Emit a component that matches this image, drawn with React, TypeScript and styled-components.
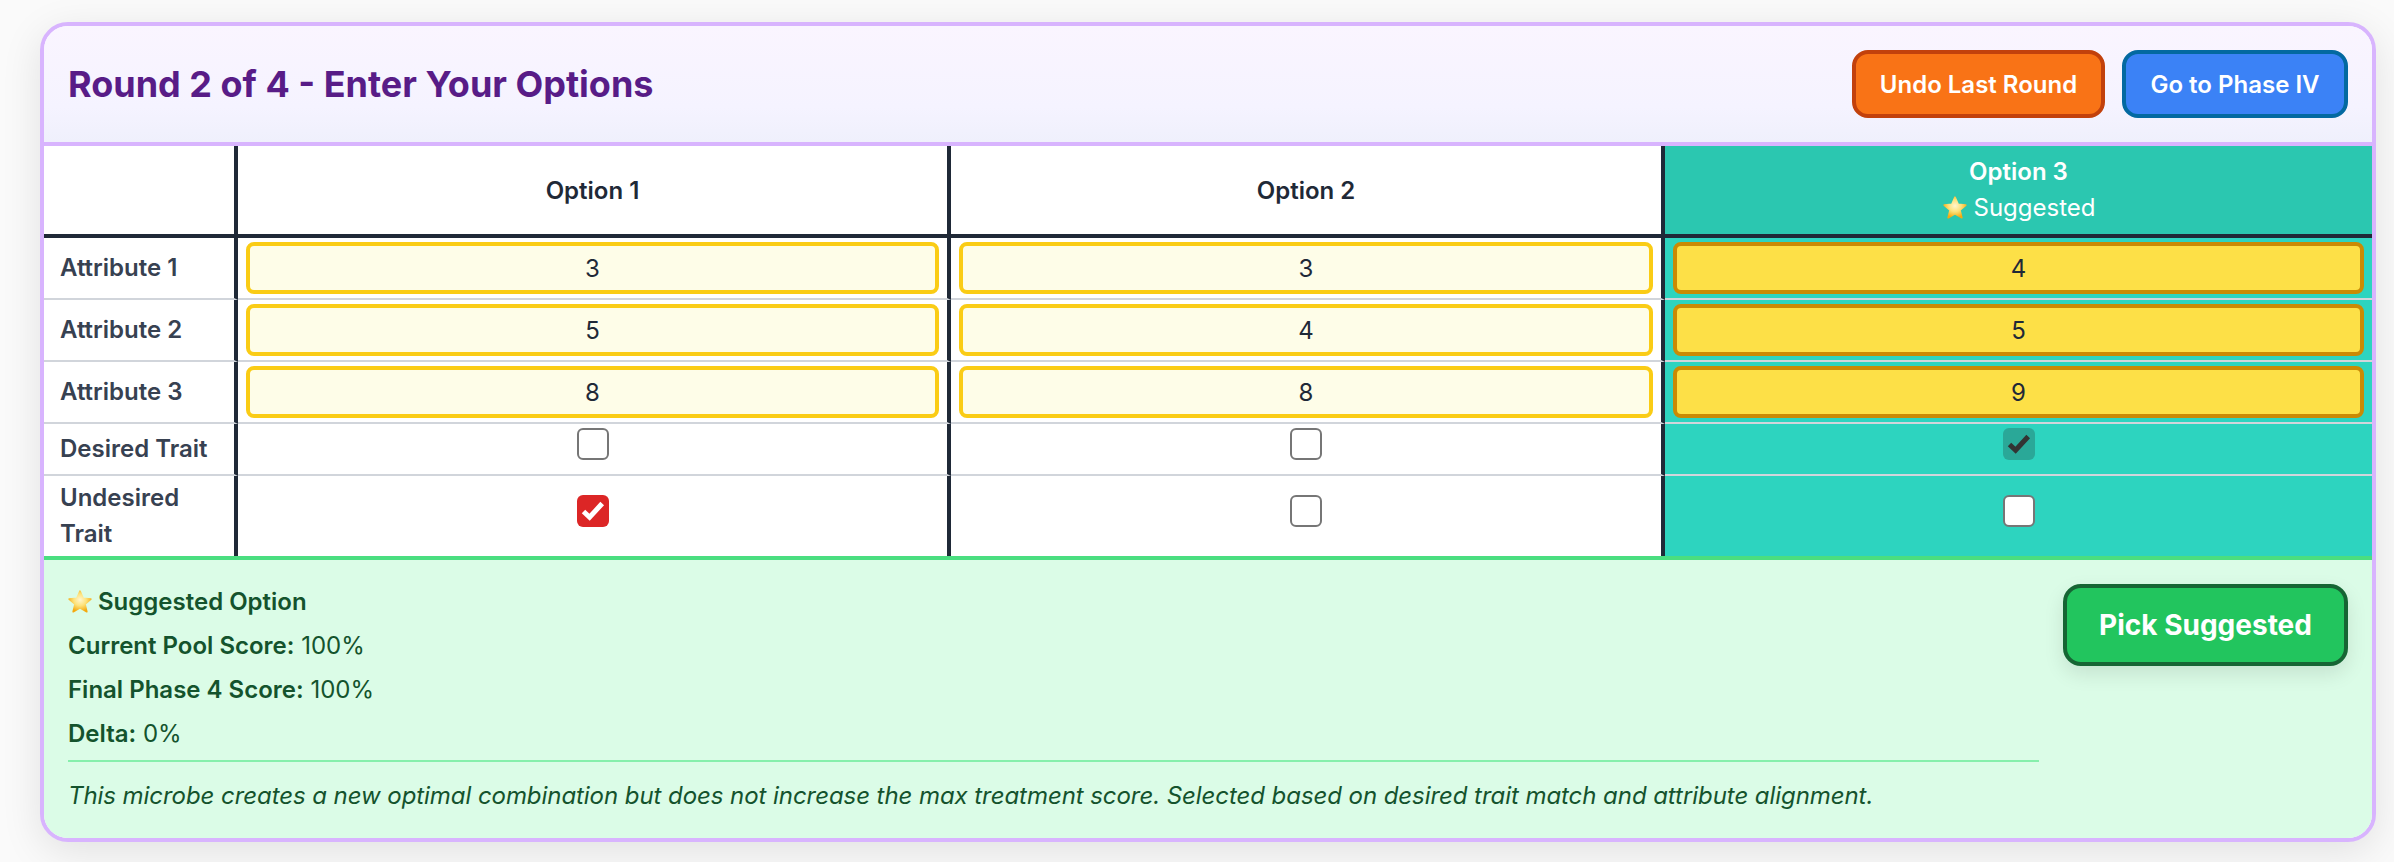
import React, { FC } from "react";
import styled, { createGlobalStyle } from "styled-components";

const GlobalStyle = createGlobalStyle`
  html, body {
    margin: 0;
    padding: 0;
    background: #fafafa;
    font-family: "Inter", "Liberation Sans", sans-serif;
  }
`;

const rows = [
  { label: "Attribute 1", values: [3, 3, 4] },
  { label: "Attribute 2", values: [5, 4, 5] },
  { label: "Attribute 3", values: [8, 8, 9] },
];

const Star: FC<{ size: number }> = ({ size }) => (
  <StarIcon width={size} height={size} viewBox="0 0 24 24">
    <defs>
      <radialGradient id="starFill" cx="50%" cy="42%" r="58%">
        <stop offset="0%" stopColor="#fff6cf" />
        <stop offset="50%" stopColor="#fde27a" />
        <stop offset="100%" stopColor="#f4a90f" />
      </radialGradient>
    </defs>
    <path
      d="M12 2l2.900 6.600 7.100.7-5.400 4.700 1.700 7-6.300-3.700-6.300 3.700 1.700-7L2 9.300l7.100-.7z"
      fill="url(#starFill)"
      stroke="url(#starFill)"
      strokeWidth="1.500"
      strokeLinejoin="round"
    />
  </StarIcon>
);

type CheckProps = { checked?: boolean; $bg?: string; $mark?: string };

const Check: FC<CheckProps> = ({ checked, $bg, $mark }) => (
  <CheckBox role="checkbox" aria-checked={!!checked} $checked={checked} $bg={$bg}>
    {checked && (
      <svg width="32" height="32" viewBox="0 0 32 32">
        <path d="M6.500 16.500L12.600 22.300L25.200 8.500" fill="none" stroke={$mark || "#fff"} strokeWidth="5" />
      </svg>
    )}
  </CheckBox>
);

const App: FC = () => {
  return (
    <Page>
      <GlobalStyle />
      <Card>
        <Header>
          <Title>Round 2 of 4 - Enter Your Options</Title>
          <HeaderActions>
            <ActionButton $bg="#f97316" $border="#c2410c" $width={253}>Undo Last Round</ActionButton>
            <ActionButton $bg="#3b82f6" $border="#0369a1" $width={226}>Go to Phase IV</ActionButton>
          </HeaderActions>
        </Header>

        <Grid>
          <colgroup>
            <col style={{ width: 194 }} />
            <col style={{ width: 713 }} />
            <col style={{ width: 714 }} />
            <col />
          </colgroup>
          <thead>
            <tr>
              <HeadCell />
              <HeadCell>Option 1</HeadCell>
              <HeadCell>Option 2</HeadCell>
              <HeadCell $suggested>
                <HeadLine>Option 3</HeadLine>
                <SuggestedTag><Star size={26} /> Suggested</SuggestedTag>
              </HeadCell>
            </tr>
          </thead>
          <tbody>
            {rows.map((row) => (
              <tr key={row.label}>
                <LabelCell>{row.label}</LabelCell>
                {row.values.map((value, i) => (
                  <InputCell key={i} $suggested={i === 2}>
                    <ValueInput $suggested={i === 2} defaultValue={value} />
                  </InputCell>
                ))}
              </tr>
            ))}
            <tr>
              <LabelCell>Desired Trait</LabelCell>
              <CheckCell><Check /></CheckCell>
              <CheckCell><Check /></CheckCell>
              <CheckCell $suggested><Check checked $bg="#2aa898" $mark="#333" /></CheckCell>
            </tr>
            <LastRow>
              <LabelCell>Undesired<br />Trait</LabelCell>
              <CheckCell><Check checked $bg="#dc2626" /></CheckCell>
              <CheckCell><Check /></CheckCell>
              <CheckCell $suggested><Check /></CheckCell>
            </LastRow>
          </tbody>
        </Grid>

        <Suggestion>
          <SuggestionText>
            <SuggestionHead><Star size={26} /><strong>Suggested Option</strong></SuggestionHead>
            <SuggestionLine><strong>Current Pool Score:</strong> 100%</SuggestionLine>
            <SuggestionLine><strong>Final Phase 4 Score:</strong> 100%</SuggestionLine>
            <SuggestionLine><strong>Delta:</strong> 0%</SuggestionLine>
            <Reason>
              This microbe creates a new optimal combination but does not increase the max treatment score. Selected based on desired trait match and attribute alignment.
            </Reason>
          </SuggestionText>
          <PickButton>Pick Suggested</PickButton>
        </Suggestion>
      </Card>
    </Page>
  );
};

const Page = styled.div`
  padding: 22px 18px 20px 40px;
  height: 862px;
  box-sizing: border-box;
`;

const Card = styled.div`
  border: 4px solid #d8b4fe;
  border-radius: 28px;
  overflow: hidden;
  height: 820px;
  box-sizing: border-box;
  background: #fff;
  box-shadow: 0 10px 40px rgba(0, 0, 0, 0.1);
`;

const Header = styled.div`
  height: 120px;
  box-sizing: border-box;
  border-bottom: 4px solid #d8b4fe;
  background: linear-gradient(180deg, #faf5ff 0%, #f5f3ff 70%, #eff0fc 100%);
  display: flex;
  align-items: center;
  justify-content: space-between;
  padding: 0 24px;
`;

const Title = styled.h2`
  margin: 0;
  color: #581c87;
  font-size: 36px;
  font-weight: 700;
`;

const HeaderActions = styled.div`
  display: flex;
  gap: 17px;
`;

const ActionButton = styled.button<{ $bg: string; $border: string; $width: number }>`
  width: ${(p) => p.$width}px;
  height: 68px;
  padding: 0;
  border: 4px solid ${(p) => p.$border};
  border-radius: 16px;
  background: ${(p) => p.$bg};
  color: #fff;
  font-family: inherit;
  font-size: 24px;
  font-weight: 600;
`;

const Grid = styled.table`
  width: 100%;
  border-collapse: separate;
  border-spacing: 0;
  table-layout: fixed;
`;

const HeadCell = styled.th<{ $suggested?: boolean }>`
  height: 88px;
  padding: 0;
  box-sizing: content-box;
  border-bottom: 4px solid #1f2937;
  border-right: ${(p) => (p.$suggested ? "none" : "4px solid #1f2937")};
  background: ${(p) => (p.$suggested ? "#2bc7b0" : "#fff")};
  color: ${(p) => (p.$suggested ? "#fff" : "#1f2937")};
  font-size: 24px;
  font-weight: 600;
  text-align: center;
`;

const HeadLine = styled.div`
  line-height: 36px;
`;

const SuggestedTag = styled.div`
  display: flex;
  align-items: center;
  justify-content: center;
  gap: 6px;
  line-height: 36px;
  font-weight: 400;
`;

const StarIcon = styled.svg`
  display: inline-block;
  vertical-align: -4px;
  flex: none;
`;

const LabelCell = styled.td`
  padding: 0 12px 0 16px;
  border-right: 4px solid #1f2937;
  border-bottom: 2px solid #d1d5db;
  color: #374151;
  font-size: 24px;
  font-weight: 600;
  line-height: 36px;
`;

const InputCell = styled.td<{ $suggested?: boolean }>`
  height: 60px;
  padding: 4px 8px;
  box-sizing: border-box;
  border-bottom: 2px solid #d1d5db;
  border-right: ${(p) => (p.$suggested ? "none" : "4px solid #1f2937")};
  background: ${(p) => (p.$suggested ? "#2dd4bf" : "#fff")};
`;

const ValueInput = styled.input<{ $suggested?: boolean }>`
  display: block;
  width: 100%;
  height: 52px;
  box-sizing: border-box;
  border: 4px solid ${(p) => (p.$suggested ? "#ca8a04" : "#facc15")};
  border-radius: 8px;
  background: ${(p) => (p.$suggested ? "#fde047" : "#fefde8")};
  color: #1f2937;
  font-family: inherit;
  font-size: 24px;
  text-align: center;
`;

const CheckCell = styled.td<{ $suggested?: boolean }>`
  height: 32px;
  padding: 4px 0 14px;
  box-sizing: content-box;
  border-bottom: 2px solid #d1d5db;
  border-right: ${(p) => (p.$suggested ? "none" : "4px solid #1f2937")};
  background: ${(p) => (p.$suggested ? "#2dd4bf" : "#fff")};
  vertical-align: top;
`;

const CheckBox = styled.span<{ $checked?: boolean; $bg?: string }>`
  display: block;
  width: 32px;
  height: 32px;
  margin: 0 auto;
  box-sizing: border-box;
  border-radius: 6px;
  background: ${(p) => (p.$checked ? p.$bg : "#fff")};
  border: ${(p) => (p.$checked ? "none" : "2px solid #767676")};
  svg {
    display: block;
  }
`;

const LastRow = styled.tr`
  & > td {
    height: 80px;
    border-bottom: none;
  }
  & > td:not(:first-child) {
    height: 61px;
    padding: 19px 0 0;
  }
`;

const Suggestion = styled.div`
  display: flex;
  justify-content: space-between;
  align-items: flex-start;
  gap: 24px;
  height: 282px;
  box-sizing: border-box;
  border-top: 4px solid #4ade80;
  background: #dbfce7;
  padding: 24px 24px 0 24px;
  color: #14532d;
`;

const SuggestionText = styled.div`
  flex: 1;
`;

const SuggestionLine = styled.div`
  height: 44px;
  line-height: 36px;
  font-size: 24px;
  strong {
    font-weight: 600;
  }
`;

const SuggestionHead = styled(SuggestionLine)`
  display: flex;
  align-items: flex-start;
  gap: 5px;
  margin-left: -1px;
  svg {
    margin-top: 5px;
  }
`;

const Reason = styled.div`
  padding-top: 16px;
  border-top: 2px solid #86efac;
  font-size: 24px;
  line-height: 36px;
  font-style: italic;
  letter-spacing: -0.065px;
`;

const PickButton = styled.button`
  flex: none;
  width: 285px;
  height: 82px;
  border: 4px solid #166534;
  border-radius: 18px;
  background: #22c55e;
  color: #fff;
  font-family: inherit;
  font-size: 28px;
  font-weight: 700;
  box-shadow: 0 8px 20px rgba(0, 0, 0, 0.1);
`;

export default App;
